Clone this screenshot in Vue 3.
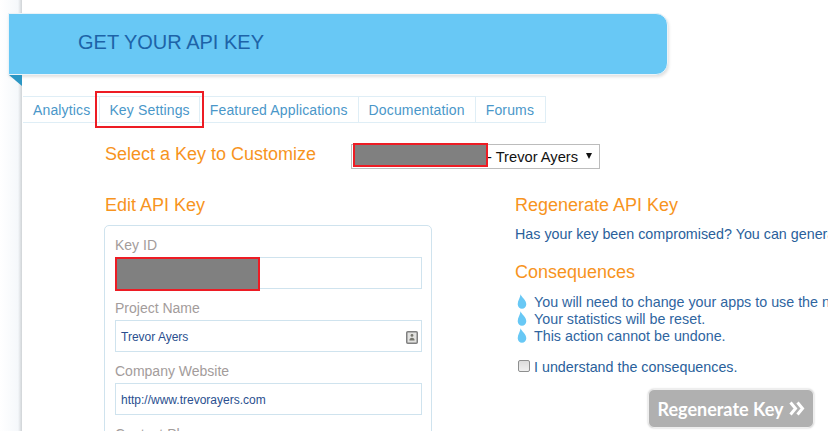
<template>
  <div class="page">
    <div class="sheet">
      <header class="banner">
        <h1>GET YOUR API KEY</h1>
        <span class="fold"></span>
      </header>

      <nav class="tabs">
        <a v-for="tab in tabs" :key="tab" class="tab" :class="{ marked: tab === 'Key Settings' }">{{ tab }}</a>
      </nav>

      <div class="content">
        <div class="key-select">
          <h2>Select a Key to Customize</h2>
          <div class="select">
            <span class="redact redact-select"></span>
            <span class="select-text">- Trevor Ayers</span>
            <span class="arrow"></span>
          </div>
        </div>

        <div class="columns">
          <section class="left">
            <h2>Edit API Key</h2>
            <div class="card">
              <div v-for="field in fields" :key="field.label" class="field">
                <label>{{ field.label }}</label>
                <div class="input">
                  <span v-if="field.redacted" class="redact redact-input"></span>
                  <span>{{ field.value }}</span>
                  <svg v-if="field.icon" class="contact-icon" width="12" height="13" viewBox="0 0 12 13">
                    <rect x="0.75" y="0.75" width="10.5" height="11.5" rx="1" fill="#e2e2e0" stroke="#808080" stroke-width="1.5" />
                    <circle cx="6" cy="4.4" r="1.4" fill="#77776f" />
                    <path d="M3.4 9.4c0-1.8 1-2.7 2.6-2.7s2.6 0.9 2.6 2.7z" fill="#77776f" />
                  </svg>
                </div>
              </div>
            </div>
          </section>

          <section class="right">
            <h2>Regenerate API Key</h2>
            <p class="intro">Has your key been compromised? You can generate a new one here.</p>
            <h2 class="consequences">Consequences</h2>
            <ul>
              <li v-for="item in consequences" :key="item">
                <svg width="10" height="15" viewBox="0 0 10 15">
                  <path d="M3.6 0.3C4.6 3.4 9.3 6 9.3 10.2 9.3 12.8 7.3 14.7 5 14.7S0.7 12.8 0.7 10.2C0.7 6.6 3.2 4 3.6 0.3z" fill="#68c8f5" />
                </svg>
                <span>{{ item }}</span>
              </li>
            </ul>
            <label class="agree">
              <input type="checkbox" />
              <span>I understand the consequences.</span>
            </label>
            <button class="regen" type="button">
              <span>Regenerate Key</span>
              <svg width="16" height="15" viewBox="0 0 16 15">
                <path d="M1.5 1.5L6.5 7.5 1.5 13.5M8.5 1.5L13.5 7.5 8.5 13.5" fill="none" stroke="#fff" stroke-width="3" />
              </svg>
            </button>
          </section>
        </div>
      </div>
    </div>
  </div>
</template>

<script setup>
const tabs = ['Analytics', 'Key Settings', 'Featured Applications', 'Documentation', 'Forums']

const fields = [
  { label: 'Key ID', value: '', redacted: true },
  { label: 'Project Name', value: 'Trevor Ayers', icon: true },
  { label: 'Company Website', value: 'http://www.trevorayers.com' },
  { label: 'Contact Phone', value: '' }
]

const consequences = [
  'You will need to change your apps to use the new key.',
  'Your statistics will be reset.',
  'This action cannot be undone.'
]
</script>

<style>
html, body {
  margin: 0;
  background: #fff;
}
</style>

<style scoped>
.page {
  width: 828px;
  height: 431px;
  overflow: hidden;
  box-sizing: border-box;
  padding-left: 22px;
  background: linear-gradient(to right, #fff 0, #f5f8fb 18px, #cfd3d6 22px);
  font-family: "Liberation Sans", Arial, sans-serif;
}

.sheet {
  width: 806px;
  height: 431px;
  background: #fff;
  padding-top: 13px;
  box-sizing: border-box;
}

.banner {
  position: relative;
  box-sizing: border-box;
  width: 660px;
  height: 62px;
  margin-left: -14px;
  padding: 15px 0 0 69px;
  background: #68c8f5;
  border: 1px solid #eaf3f8;
  border-radius: 0 12px 12px 0;
  box-shadow: 1px 2px 3px rgba(0, 0, 0, 0.12);
}

.banner h1 {
  margin: 0;
  font-size: 20px;
  font-weight: normal;
  line-height: 26px;
  color: #1d63a8;
}

.fold {
  position: absolute;
  left: 0;
  top: 61px;
  border-top: 11px solid #2b96c4;
  border-left: 13px solid transparent;
}

.tabs {
  display: flex;
  margin: 21px 0 0 1px;
  height: 27px;
  width: fit-content;
  box-sizing: border-box;
  border-top: 1px solid #dfeef6;
  border-bottom: 1px solid #dfeef6;
  border-right: 1px solid #dfeef6;
}

.tab {
  position: relative;
  padding: 0 10px;
  line-height: 26px;
  font-size: 14px;
  letter-spacing: 0.15px;
  color: #4a97c9;
  border-left: 1px solid #dfeef6;
}

.tab:first-child {
  border-left: 0;
  padding-right: 9px;
}

.tab:last-child {
  padding-right: 11px;
}

.tab.marked {
  padding: 0 9px;
}

.tab.marked::after {
  content: "";
  position: absolute;
  left: -5px;
  right: -5px;
  top: -6px;
  bottom: -6px;
  border: 2px solid #ed1c24;
}

.content {
  padding-left: 83px;
}

h2 {
  margin: 0;
  font-size: 18px;
  font-weight: normal;
  line-height: 22px;
  color: #f7941e;
}

.key-select {
  display: flex;
  align-items: flex-start;
  margin-top: 20px;
}

.select {
  position: relative;
  display: flex;
  align-items: center;
  justify-content: flex-end;
  box-sizing: border-box;
  width: 249px;
  height: 25px;
  margin: 1px 0 0 35px;
  padding-right: 7px;
  border: 1px solid #bcbcbc;
  font-size: 14.7px;
  color: #111;
}

.select-text {
  margin-right: 8px;
}

.arrow {
  border-top: 6px solid #111;
  border-left: 3.5px solid transparent;
  border-right: 3.5px solid transparent;
  margin-bottom: 2px;
}

.redact {
  position: absolute;
  box-sizing: border-box;
  background: #808080;
  border: 2px solid #ed1c24;
}

.redact-select {
  left: 1px;
  top: -2px;
  width: 135px;
  height: 24px;
}

.columns {
  display: flex;
  margin-top: 25px;
}

.left {
  width: 328px;
  flex: none;
}

.right {
  margin-left: 82px;
  width: 320px;
  white-space: nowrap;
  font-size: 14.3px;
  color: #2a5f9b;
}

.card {
  box-sizing: border-box;
  margin: 9px 1px 0 -1px;
  padding: 11px 9px 0 10px;
  height: 260px;
  border: 1px solid #cfe3ee;
  border-radius: 5px;
}

.field {
  margin-bottom: 11px;
}

.field label {
  display: block;
  font-size: 14px;
  line-height: 17px;
  margin-bottom: 3px;
  color: #a39c9b;
}

.input {
  position: relative;
  display: flex;
  align-items: center;
  justify-content: space-between;
  box-sizing: border-box;
  height: 32px;
  padding: 2px 8px 0 5px;
  border: 1px solid #cfe3ee;
  font-size: 12px;
  color: #2a4f8f;
}

.redact-input {
  left: -1px;
  top: -1px;
  width: 145px;
  height: 34px;
}

.contact-icon {
  margin-right: -5px;
}

.intro {
  margin: 10px 0 0;
  line-height: 17px;
}

.consequences {
  margin-top: 18px;
}

ul {
  list-style: none;
  margin: 11px 0 0;
  padding: 0;
  color: #2f659f;
}

li {
  display: flex;
  align-items: flex-start;
  height: 17px;
  line-height: 17px;
}

li svg {
  margin: 0 7px 0 2px;
  flex: none;
}

.agree {
  display: flex;
  align-items: center;
  margin-top: 14px;
  line-height: 17px;
}

.agree input {
  appearance: none;
  box-sizing: border-box;
  width: 12px;
  height: 12px;
  margin: 0 4px 3px 3px;
  border: 1px solid #8e8f8f;
  border-radius: 2px;
  background: linear-gradient(#dcdcdc, #f0f0f0);
}

.regen {
  display: flex;
  align-items: center;
  justify-content: center;
  gap: 5px;
  box-sizing: border-box;
  width: 166px;
  height: 39px;
  margin: 13px 0 0 133px;
  padding: 0;
  border: 1px solid #eee;
  border-radius: 6px;
  background: #b0b0b0;
  box-shadow: 0 0 2px rgba(0, 0, 0, 0.25);
  color: #fff;
  font-family: Lato, sans-serif;
  font-size: 18px;
  font-weight: bold;
  white-space: nowrap;
}
</style>
